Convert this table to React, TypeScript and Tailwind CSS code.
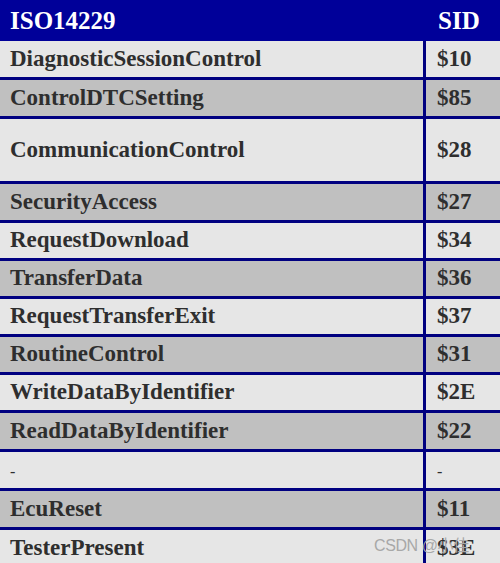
const rows = [
  { name: 'DiagnosticSessionControl', sid: '$10', h: 'h-[36px]', shade: 'light' },
  { name: 'ControlDTCSetting', sid: '$85', h: 'h-[39px]', shade: 'dark' },
  { name: 'CommunicationControl', sid: '$28', h: 'h-[65px]', shade: 'light' },
  { name: 'SecurityAccess', sid: '$27', h: 'h-[39px]', shade: 'dark' },
  { name: 'RequestDownload', sid: '$34', h: 'h-[38px]', shade: 'light' },
  { name: 'TransferData', sid: '$36', h: 'h-[38px]', shade: 'dark' },
  { name: 'RequestTransferExit', sid: '$37', h: 'h-[38px]', shade: 'light' },
  { name: 'RoutineControl', sid: '$31', h: 'h-[38px]', shade: 'dark' },
  { name: 'WriteDataByIdentifier', sid: '$2E', h: 'h-[38px]', shade: 'light' },
  { name: 'ReadDataByIdentifier', sid: '$22', h: 'h-[39px]', shade: 'dark' },
  { name: '-', sid: '-', h: 'h-[39px]', shade: 'light', plain: true },
  { name: 'EcuReset', sid: '$11', h: 'h-[39px]', shade: 'dark' },
  { name: 'TesterPresent', sid: '$3E', h: 'h-[39px]', shade: 'light' },
];

export default function App() {
  return (
    <div className="relative w-[500px] h-[563px] overflow-hidden bg-[#e6e6e6] font-['Liberation_Serif',serif]">
      {/* Header */}
      <div className="flex h-[41px] items-center bg-[#000099] text-white font-bold text-[25px]">
        <div className="w-[426px] pl-[10px]">ISO14229</div>
        <div className="flex-1 pl-[12px]">SID</div>
      </div>

      {rows.map((row, i) => (
        <div
          key={i}
          className={`flex ${row.h} border-[#000080] text-[23px] text-[#2e2e2e] ${
            row.shade === 'dark' ? 'bg-[#c0c0c0]' : 'bg-[#e6e6e6]'
          } ${i === 0 ? '' : 'border-t-[3px]'}`}
        >
          <div className={`flex items-center w-[426px] pl-[10px] border-r-[3px] border-[#000080] ${row.plain ? 'font-normal text-[16px] pt-[4px]' : 'font-bold'}`}>
            {row.name}
          </div>
          <div className={`flex items-center flex-1 pl-[11px] ${row.plain ? 'font-normal text-[16px] pt-[4px]' : 'font-bold'}`}>
            {row.sid}
          </div>
        </div>
      ))}

      {/* watermark */}
      <div className="absolute left-[374px] top-[534px] text-[16px] text-[#a8a8a8] font-['Liberation_Sans','Noto_Sans_CJK_SC',sans-serif] tracking-tight">
        CSDN @小佳
      </div>
    </div>
  );
}
